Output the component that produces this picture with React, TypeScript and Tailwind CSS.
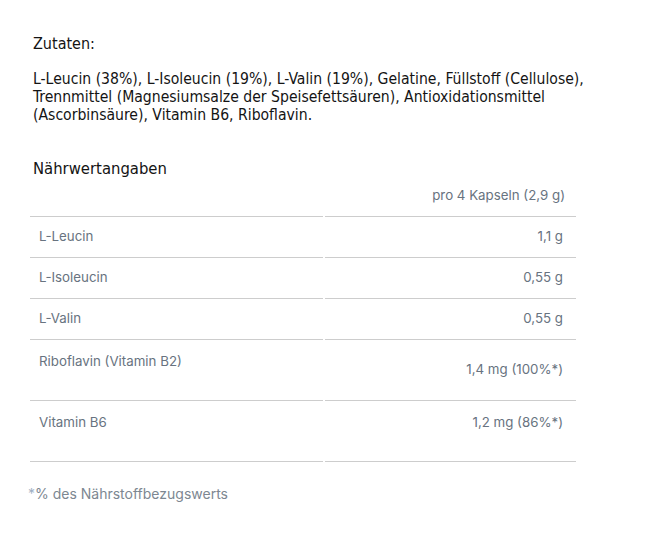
const rows = [
  { name: 'L-Leucin', value: '1,1 g', tall: false },
  { name: 'L-Isoleucin', value: '0,55 g', tall: false },
  { name: 'L-Valin', value: '0,55 g', tall: false },
  { name: 'Riboflavin (Vitamin B2)', value: '1,4 mg (100%*)', tall: true, mid: true },
  { name: 'Vitamin B6', value: '1,2 mg (86%*)', tall: true, mid: false },
];

export default function App() {
  return (
    <div className="w-[669px] h-[545px] bg-white pt-[31px] pl-[30px]">
      <div className="pl-[3px] font-['DejaVu_Sans_Condensed','DejaVu_Sans',sans-serif] font-stretch-condensed text-[#141414]">
        <h2 className="text-[16px] leading-[26px]">Zutaten:</h2>
        <p className="mt-[13px] text-[15.6px] leading-[18px]">
          L-Leucin (38%), L-Isoleucin (19%), L-Valin (19%), Gelatine, Füllstoff (Cellulose),
          <br />
          Trennmittel (Magnesiumsalze der Speisefettsäuren), Antioxidationsmittel
          <br />
          (Ascorbinsäure), Vitamin B6, Riboflavin.
        </p>
        <h3 className="mt-[38px] text-[16.5px] leading-[14px]">Nährwertangaben</h3>
      </div>

      <div className="w-[546px] font-['Inter',sans-serif] text-[13.3px] text-[#687380]">
        <div className="flex gap-[2px]">
          <div className="w-[293px] h-[41px] border-b border-[#cdcdcd]" />
          <div className="flex-1 h-[41px] border-b border-[#cdcdcd] flex items-center justify-end pr-[11px]">
            pro 4 Kapseln (2,9 g)
          </div>
        </div>
        {rows.map((r) => (
          <div key={r.name} className="flex gap-[2px]">
            <div
              className={`w-[293px] border-b border-[#cdcdcd] pl-[9px] flex ${
                r.tall ? 'h-[61px] items-start pt-[12px]' : 'h-[41px] items-center'
              }`}
            >
              {r.name}
            </div>
            <div
              className={`flex-1 border-b border-[#cdcdcd] pr-[13px] flex justify-end ${
                r.tall ? (r.mid ? 'h-[61px] items-center' : 'h-[61px] items-start pt-[12px]') : 'h-[41px] items-center'
              }`}
            >
              {r.value}
            </div>
          </div>
        ))}
      </div>

      <p className="mt-[21px] -ml-[2px] font-['Inter',sans-serif] text-[14px] text-[#7d8791]">
        <span className="text-[#9fb0c4]">*</span>% des Nährstoffbezugswerts
      </p>
    </div>
  );
}
